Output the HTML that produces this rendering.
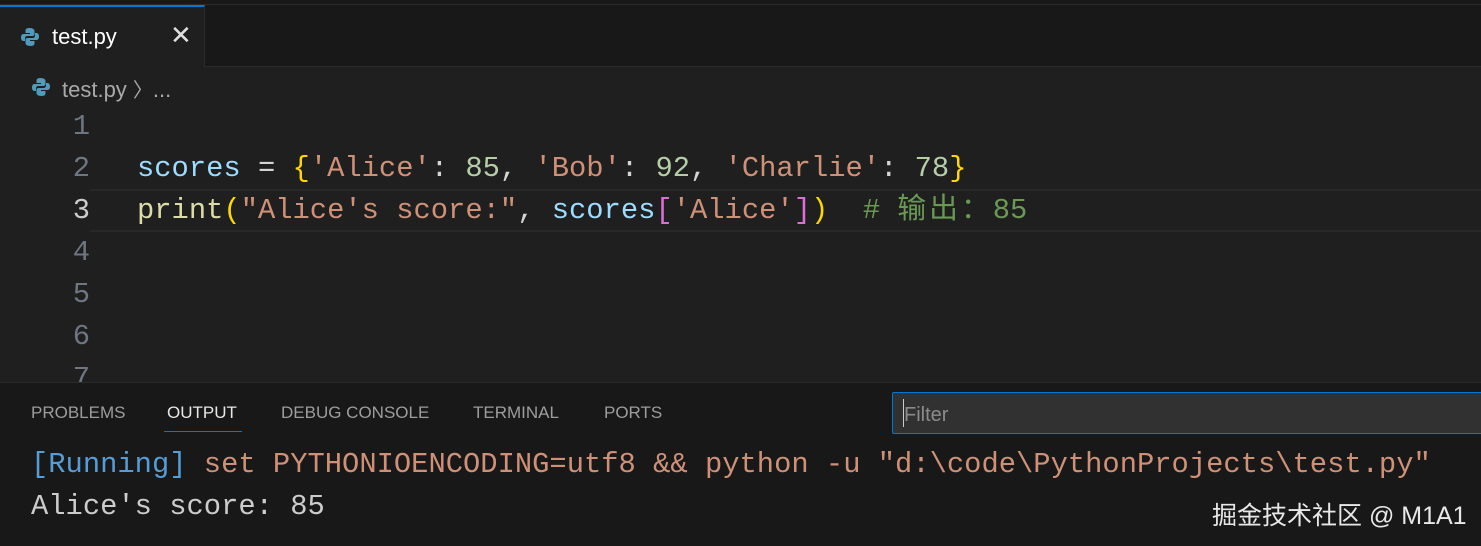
<!DOCTYPE html>
<html><head><meta charset="utf-8"><style>
*{margin:0;padding:0;box-sizing:border-box}
body{width:1481px;height:546px;background:#1f1f1f;position:relative;overflow:hidden;font-family:"Liberation Sans","Noto Sans CJK SC",sans-serif}
.abs{position:absolute}
.mono{font-family:"Liberation Mono","Noto Sans CJK SC",monospace;font-size:28.8px;white-space:pre;line-height:42px}
.ln{position:absolute;left:40px;width:50px;text-align:right;color:#6e7681}
.code{position:absolute;left:137px}
.v{color:#9cdcfe}.s{color:#ce9178}.n{color:#b5cea8}.o{color:#d4d4d4}.y{color:#ffd700}.p{color:#da70d6}.f{color:#dcdcaa}.c{color:#6a9955}
.pt{position:absolute;top:403px;font-size:17px;color:#9d9d9d}
</style></head><body>
<div class="abs" style="left:0;top:0;width:1481px;height:67px;background:#181818;border-bottom:1px solid #2b2b2b"></div>
<div class="abs" style="left:0;top:0;width:1481px;height:5px;background:#181818;border-bottom:1px solid #2b2b2b"></div>
<div class="abs" style="left:0;top:5px;width:205px;height:62px;background:#1f1f1f;border-top:2px solid #0078d4;border-right:1px solid #2b2b2b"></div>
<svg class="abs" style="left:20px;top:27px" width="20" height="20" viewBox="0 0 20 20"><path d="M9.5 1C6 1 5.5 2.5 5.5 4v2h4.5v1H3.5C1.5 7 1 9 1 10.5S1.5 14 3.5 14H5v-2.5C5 10 6 9 7.5 9h5c1.3 0 2-1 2-2V4c0-1.5-1.5-3-5-3z" fill="#519aba"/><path d="M10.5 19c3.5 0 4-1.5 4-3v-2H10v-1h6.5c2 0 2.5-2 2.5-3.5S18.5 6 16.5 6H15v2.5c0 1.5-1 2.5-2.5 2.5h-5c-1.3 0-2 1-2 2v3c0 1.5 1.5 3 5 3z" fill="#519aba"/></svg>
<div class="abs" style="left:52px;top:24px;font-size:22px;color:#ffffff">test.py</div>
<div class="abs" style="left:170px;top:20px;font-size:26px;color:#e0e0e0">✕</div>
<svg class="abs" style="left:31px;top:77px" width="20" height="20" viewBox="0 0 20 20"><path d="M9.5 1C6 1 5.5 2.5 5.5 4v2h4.5v1H3.5C1.5 7 1 9 1 10.5S1.5 14 3.5 14H5v-2.5C5 10 6 9 7.5 9h5c1.3 0 2-1 2-2V4c0-1.5-1.5-3-5-3z" fill="#519aba"/><path d="M10.5 19c3.5 0 4-1.5 4-3v-2H10v-1h6.5c2 0 2.5-2 2.5-3.5S18.5 6 16.5 6H15v2.5c0 1.5-1 2.5-2.5 2.5h-5c-1.3 0-2 1-2 2v3c0 1.5 1.5 3 5 3z" fill="#519aba"/></svg>
<div class="abs" style="left:62px;top:74px;font-size:22px;color:#a9a9a9">test.py <span style="font-size:20px">〉</span>...</div>
<div class="abs" style="left:90px;top:189px;width:1391px;height:43px;border-top:2px solid #282828;border-bottom:2px solid #282828"></div>
<div class="mono">
<div class="ln" style="top:106px">1</div>
<div class="ln" style="top:148px">2</div>
<div class="ln" style="top:190px;color:#cccccc">3</div>
<div class="ln" style="top:232px">4</div>
<div class="ln" style="top:274px">5</div>
<div class="ln" style="top:316px">6</div>
<div class="ln" style="top:358px">7</div>
<div class="code" style="top:148px"><span class="v">scores</span><span class="o"> = </span><span class="y">{</span><span class="s">'Alice'</span><span class="o">: </span><span class="n">85</span><span class="o">, </span><span class="s">'Bob'</span><span class="o">: </span><span class="n">92</span><span class="o">, </span><span class="s">'Charlie'</span><span class="o">: </span><span class="n">78</span><span class="y">}</span></div>
<div class="code" style="top:190px"><span class="f">print</span><span class="y">(</span><span class="s">"Alice's score:"</span><span class="o">, </span><span class="v">scores</span><span class="p">[</span><span class="s">'Alice'</span><span class="p">]</span><span class="y">)</span>  <span class="c"># <span style="letter-spacing:3px">输出：</span>85</span></div>
</div>
<div class="abs" style="left:0;top:382px;width:1481px;height:164px;background:#181818;border-top:1px solid #2b2b2b"></div>
<div class="pt" style="left:31px">PROBLEMS</div>
<div class="pt" style="left:167px;color:#e7e7e7">OUTPUT</div>
<div class="abs" style="left:164px;top:431px;width:78px;height:1px;background:#0078d4"></div>
<div class="pt" style="left:281px">DEBUG CONSOLE</div>
<div class="pt" style="left:473px">TERMINAL</div>
<div class="pt" style="left:604px">PORTS</div>
<div class="abs" style="left:892px;top:392px;width:600px;height:42px;background:#313131;border:1px solid #0078d4;border-radius:2px"></div>
<div class="abs" style="left:903px;top:399px;width:1px;height:28px;background:#ccc"></div>
<div class="abs" style="left:904px;top:404px;font-size:20px;color:#8b8b8b">Filter</div>
<div class="mono abs" style="left:31px;top:444px"><span style="color:#569cd6">[Running]</span><span class="s"> set PYTHONIOENCODING=utf8 &amp;&amp; python -u "d:\code\PythonProjects\test.py"</span></div>
<div class="mono abs" style="left:31px;top:486px;color:#cccccc">Alice's score: 85</div>
<div class="abs" style="left:1212px;top:496px;font-size:25px;color:#e8e8e8">掘金技术社区 @ M1A1</div>
</body></html>
